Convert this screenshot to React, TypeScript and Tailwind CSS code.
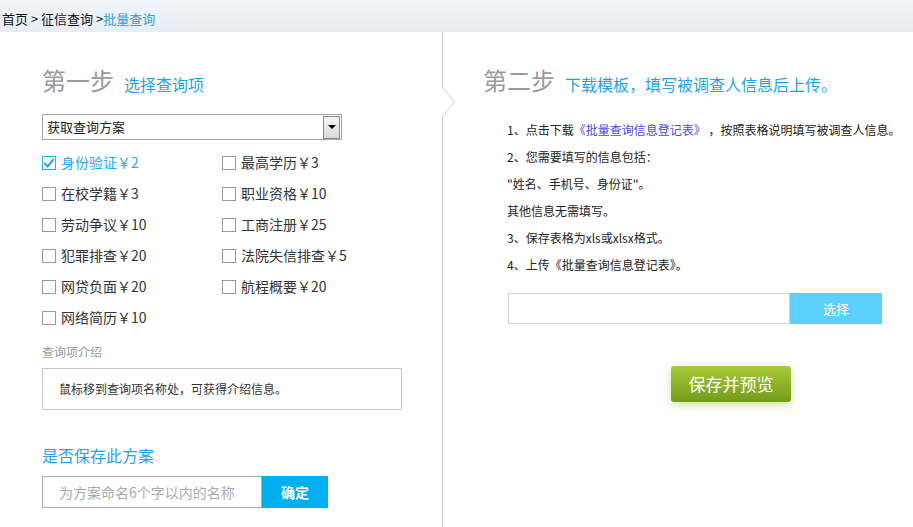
import React from "react"

const font = { fontFamily: '"Microsoft YaHei", "Noto Sans CJK SC", sans-serif' }

interface Item {
  name: string
  price: number
  checked?: boolean
}

const items: Item[] = [
  { name: "身份验证", price: 2, checked: true },
  { name: "最高学历", price: 3 },
  { name: "在校学籍", price: 3 },
  { name: "职业资格", price: 10 },
  { name: "劳动争议", price: 10 },
  { name: "工商注册", price: 25 },
  { name: "犯罪排查", price: 20 },
  { name: "法院失信排查", price: 5 },
  { name: "网贷负面", price: 20 },
  { name: "航程概要", price: 20 },
  { name: "网络简历", price: 10 },
]

const CheckItem = ({ name, price, checked }: Item) => {
  return (
    <div className="flex items-center h-[31px]">
      {checked ? (
        <div className="w-[14px] h-[14px] border border-[#29aef0] bg-white flex items-center justify-center">
          <svg width="14" height="12" viewBox="0 0 14 12">
            <path d="M1.5 6 L5.5 10 L12.5 1.5" fill="none" stroke="#1ea6ee" strokeWidth="2.4" />
          </svg>
        </div>
      ) : (
        <div className="w-[14px] h-[14px] border border-[#999] bg-white" />
      )}
      <span className={`ml-[5px] text-[14px] ${checked ? "text-[#28a9ea]" : "text-[#333]"}`}>
        {name}￥{price}
      </span>
    </div>
  )
}

export default function App() {
  return (
    <div className="w-[913px] h-[527px] bg-white overflow-hidden" style={font}>
      <div className="h-[32px] bg-gradient-to-b from-[#f0f4fb] to-[#e8edf4] flex items-end pb-[5px] pl-[2px] text-[13px] leading-[17px]">
        <span className="text-[#111]">首页 &gt; 征信查询 &gt; </span>
        <span className="text-[#2aa3d8]">批量查询</span>
      </div>

      <div className="flex h-[495px]">
        {/* step 1 */}
        <div className="relative w-[443px] border-r border-[#c8c8c8] pl-[42px]">
          <svg className="absolute right-[-14px] top-[54px]" width="15" height="32" viewBox="0 0 15 32">
            <polygon points="0,0 13,16 0,32" fill="white" />
            <polyline points="0.5,0 13.5,16 0.5,32" fill="none" stroke="#cfcfcf" strokeWidth="1" />
          </svg>

          <div className="flex items-end h-[32px] mt-[32px]">
            <span className="text-[24px] leading-[32px] text-[#9a9a9a]">第一步</span>
            <span className="ml-[10px] text-[16px] leading-[24px] text-[#1fa3e6]">选择查询项</span>
          </div>

          <div className="mt-[18px] w-[300px] h-[26px] border border-[#a5a5a5] flex items-center justify-between pl-[4px] pr-[1px]">
            <span className="text-[13px] text-[#222]">获取查询方案</span>
            <div className="w-[17px] h-[23px] border border-[#8a8a8a] bg-gradient-to-b from-[#f6f6f6] to-[#d8d8d8] flex items-center justify-center">
              <div className="w-0 h-0 border-l-[4px] border-r-[4px] border-t-[4px] border-l-transparent border-r-transparent border-t-black" />
            </div>
          </div>

          <div className="mt-[7px] grid grid-cols-[180px_180px]">
            {items.map((it) => (
              <CheckItem key={it.name} {...it} />
            ))}
          </div>

          <div className="mt-[11px] text-[12px] leading-[16px] text-[#999]">查询项介绍</div>
          <div className="mt-[8px] w-[360px] h-[42px] border border-[#c8c8c8] flex items-center pl-[16px] text-[12px] text-[#333]">
            鼠标移到查询项名称处，可获得介绍信息。
          </div>

          <div className="mt-[34px] text-[16px] leading-[22px] text-[#1fa3e6]">是否保存此方案</div>
          <div className="mt-[10px] flex h-[32px]">
            <div className="w-[220px] border border-[#aaa] flex items-center pl-[16px] text-[14px] text-[#aaa]">
              为方案命名6个字以内的名称
            </div>
            <button className="w-[66px] bg-[#00b0ee] text-white text-[14px] font-bold">确定</button>
          </div>
        </div>

        {/* step 2 */}
        <div className="flex-1 pl-[40px]">
          <div className="flex items-end h-[32px] mt-[32px]">
            <span className="text-[24px] leading-[32px] text-[#9a9a9a]">第二步</span>
            <span className="ml-[10px] text-[16px] leading-[24px] text-[#1fa3e6]">下载模板，填写被调查人信息后上传。</span>
          </div>

          <div className="mt-[20px] pl-[24px] text-[12px] leading-[27px] text-[#222]">
            <div>
              1、点击下载<span className="text-[#4a4ae6]">《批量查询信息登记表》</span> ，按照表格说明填写被调查人信息。
            </div>
            <div>2、您需要填写的信息包括：</div>
            <div>"姓名、手机号、身份证"。</div>
            <div>其他信息无需填写。</div>
            <div>3、保存表格为xls或xlsx格式。</div>
            <div>4、上传《批量查询信息登记表》。</div>
          </div>

          <div className="mt-[15px] ml-[25px] flex h-[31px]">
            <div className="w-[282px] border border-[#cfcfcf]" />
            <button className="w-[92px] bg-[#5dcffb] text-white text-[13px]">选择</button>
          </div>

          <button className="mt-[42px] ml-[188px] w-[120px] h-[36px] rounded-[3px] bg-gradient-to-b from-[#a8cc3a] to-[#749a1a] text-white text-[17px] shadow-[0_3px_10px_rgba(150,190,60,0.45)]">
            保存并预览
          </button>
        </div>
      </div>
    </div>
  )
}
